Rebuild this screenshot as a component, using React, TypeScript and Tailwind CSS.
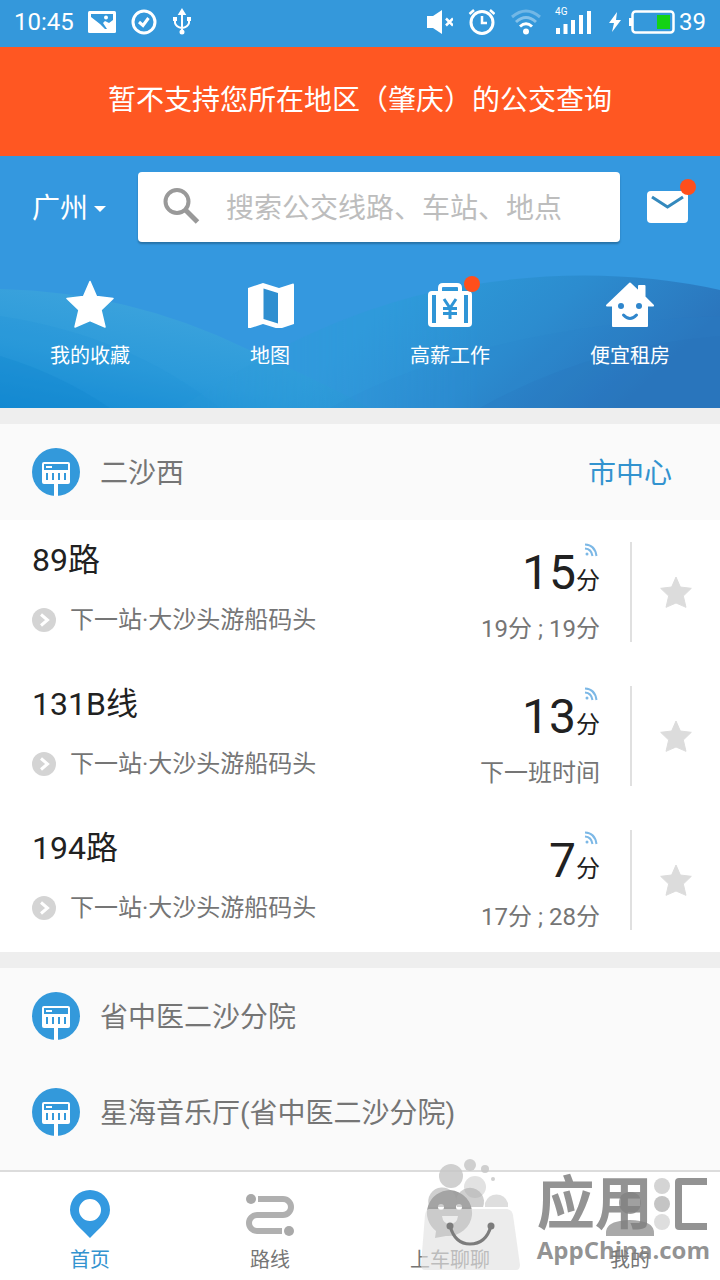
import type { ReactNode } from "react";

const SHORTCUTS = [
  { label: "我的收藏", icon: <StarIcon className="size-12" />, dot: false },
  { label: "地图", icon: <MapIcon />, dot: false },
  { label: "高薪工作", icon: <JobIcon />, dot: true },
  { label: "便宜租房", icon: <HouseIcon />, dot: false },
];

const LINES = [
  { name: "89路", next: "下一站·大沙头游船码头", minutes: 15, later: "19分 ; 19分" },
  { name: "131B线", next: "下一站·大沙头游船码头", minutes: 13, later: "下一班时间" },
  { name: "194路", next: "下一站·大沙头游船码头", minutes: 7, later: "17分 ; 28分" },
];

const STATIONS = ["省中医二沙分院", "星海音乐厅(省中医二沙分院)"];

const TABS = [
  { label: "首页", icon: <PinIcon />, active: true },
  { label: "路线", icon: <RouteIcon />, active: false },
  { label: "上车聊聊", icon: <ChatIcon />, active: false },
  { label: "我的", icon: <PersonIcon />, active: false },
];

function StarIcon({ className }: { className: string }) {
  return (
    <svg viewBox="0 0 48 48" className={className} fill="currentColor" aria-hidden="true">
      <path
        d="M24 1.500 L30.500 16.500 L47 18.500 L35 30 L39 47 L24 40.500 L9 47 L13 30 L1 18.500 L17.500 16.500 Z"
        stroke="currentColor"
        strokeWidth="1.500"
        strokeLinejoin="round"
      />
    </svg>
  );
}

function MapIcon() {
  return (
    <svg viewBox="0 0 48 48" className="size-12" aria-hidden="true">
      <path d="M2 8 L17 3 L33 8 L47 3.500 Q48 3 48 5 V44 L33 49 L17 44 L3 48.500 Q2 48.500 2 47 Z" fill="white" />
      <path d="M17.500 8.500 L32 13 V43.500 L17.500 39 Z" fill="#2f8fd0" />
    </svg>
  );
}

function JobIcon() {
  return (
    <svg viewBox="0 0 48 48" className="size-12" aria-hidden="true">
      <rect x="2" y="11" width="44" height="36" rx="4" fill="white" />
      <path d="M14 12 V8 Q14 5 17 5 H31 Q34 5 34 8 V12" fill="none" stroke="white" strokeWidth="4" />
      <path d="M8 15 V43 M40 15 V43" stroke="#2f95d6" strokeWidth="4" />
      <path d="M18 19 L24 28 L30 19 M24 28 V39 M17 28.500 H31 M17 33.500 H31" fill="none" stroke="#2f95d6" strokeWidth="3" />
    </svg>
  );
}

function HouseIcon() {
  return (
    <svg viewBox="0 0 48 48" className="size-12" aria-hidden="true">
      <path
        d="M24 3.500 L33 12 V6 H38.500 V17 L47 25.500 H41 V46 H7 V25.500 H1 Z"
        fill="white"
        stroke="white"
        strokeWidth="2"
        strokeLinejoin="round"
      />
      <circle cx="15" cy="26" r="3" fill="#2f86cc" />
      <circle cx="33" cy="26" r="3" fill="#2f86cc" />
      <path d="M17.500 35 Q24 42 30.500 35" fill="none" stroke="#2f86cc" strokeWidth="3" strokeLinecap="round" />
    </svg>
  );
}

function StationIcon() {
  return (
    <svg viewBox="0 0 48 48" className="size-12 shrink-0" aria-hidden="true">
      <circle cx="24" cy="24" r="24" fill="#3399db" />
      <path d="M22 34 H26 V48 H22 Z" fill="white" />
      <rect x="10" y="14" width="28" height="22" rx="2" fill="white" />
      <rect x="12" y="16" width="24" height="6" fill="#3399db" />
      <path d="M14 19 H20" stroke="white" strokeWidth="2" />
      <path d="M15 25 V32 M21 25 V32 M27 25 V32 M33 25 V32" stroke="#3399db" strokeWidth="2" />
    </svg>
  );
}

function PinIcon() {
  return (
    <svg viewBox="0 0 48 48" className="size-12" aria-hidden="true">
      <path
        fillRule="evenodd"
        fill="#3399e0"
        d="M24 0 A20 20 0 0 1 44 20 C44 31 33 38 24 48 C15 38 4 31 4 20 A20 20 0 0 1 24 0 Z M24 9 A11 11 0 1 0 24 31 A11 11 0 1 0 24 9 Z"
      />
    </svg>
  );
}

function RouteIcon() {
  return (
    <svg viewBox="0 0 48 48" className="size-12" aria-hidden="true">
      <circle cx="5" cy="9" r="5" fill="#a9a9a9" />
      <circle cx="43" cy="41" r="5" fill="#a9a9a9" />
      <path d="M12 9 H37 A8 8 0 0 1 37 25 H11 A8 8 0 0 0 11 41 H36" fill="none" stroke="#b0b0b0" strokeWidth="6" />
    </svg>
  );
}

function ChatIcon() {
  return (
    <svg viewBox="0 0 48 48" className="size-12" aria-hidden="true">
      <path d="M24 0 A24 23 0 1 1 20 46 L9 48 L10 41 A24 23 0 0 1 24 0 Z" fill="#a0a0a0" />
      <circle cx="15" cy="17" r="3" fill="white" />
      <circle cx="33" cy="17" r="3" fill="white" />
      <path d="M16 26 H32 Q31 34 24 34 Q17 34 16 26 Z" fill="white" />
    </svg>
  );
}

function PersonIcon() {
  return (
    <svg viewBox="0 0 48 48" className="size-12" aria-hidden="true">
      <path d="M24 2 C32 2 35 7 35 13 C35 19 30 24 24 24 C18 24 13 19 13 13 C13 7 16 2 24 2 Z" fill="#a0a0a0" />
      <path d="M0 46 V43 Q0 33 14 31 Q24 29 34 31 Q48 33 48 43 V46 Z" fill="#a9a9a9" />
    </svg>
  );
}

function Dot() {
  return <span className="absolute -top-1 -right-1.5 size-4 rounded-full bg-[#ff4f1c]" />;
}

function StatusBar() {
  return (
    <div className="flex h-[47px] items-center justify-between bg-[#3498db] px-3.5 pb-1 text-2xl text-white">
      <div className="flex items-center gap-3.5">
        <span>10:45</span>
        <svg viewBox="0 0 28 24" className="h-6 w-7" aria-hidden="true">
          <rect x="0" y="1" width="28" height="22" rx="1.500" fill="white" />
          <path d="M3 4 H25 V10 L21 13 L17 11 L15 13 L19 19 L17 19 L12 14 L3 7 Z" fill="#3498db" />
          <circle cx="18" cy="7.500" r="2" fill="white" />
        </svg>
        <svg viewBox="0 0 28 28" className="size-7" fill="none" stroke="white" strokeWidth="3" aria-hidden="true">
          <circle cx="14" cy="14" r="11" />
          <path d="M9 14 L13 17.500 L18.500 10" />
        </svg>
        <svg viewBox="0 0 20 28" className="h-7 w-5" fill="none" stroke="white" strokeWidth="2" aria-hidden="true">
          <path d="M10 4 V25 M3 11 V15 Q4 19 10 20 M17 11 V15 Q16 19 10 20" />
          <path d="M10 2 L12.500 6 H7.500 Z M2 10 H4 V12 H2 Z M16 10 H18 V12 H16 Z" fill="white" />
          <circle cx="10" cy="24" r="1.500" fill="white" />
        </svg>
      </div>
      <div className="flex items-center">
        <svg viewBox="0 0 28 24" className="mr-3.5 h-6 w-7" aria-hidden="true">
          <path d="M2 6 H8 L17 0 V24 L8 18 H2 Z" fill="white" />
          <path d="M21 8.500 L28 15.500 M28 8.500 L21 15.500" stroke="white" strokeWidth="2.500" />
        </svg>
        <svg viewBox="0 0 28 28" className="mr-4 size-7" fill="none" stroke="white" strokeWidth="3" aria-hidden="true">
          <circle cx="15" cy="14.500" r="11" />
          <path d="M15 8 V15 H20 M2.500 6 L7 2 M27.500 6 L23 2" strokeWidth="2.500" />
        </svg>
        <svg viewBox="0 0 30 26" className="mr-3.5 h-[26px] w-[30px]" fill="none" stroke="white" strokeWidth="3" aria-hidden="true">
          <path d="M1 8 Q15 -4 29 8" opacity="0.3" />
          <path d="M5 13 Q15 4 25 13" opacity="0.4" />
          <path d="M9 17.500 Q15 12 21 17.500" />
          <circle cx="15" cy="22.500" r="1.500" fill="white" />
        </svg>
        <span className="relative mr-4 h-6 w-[38px]">
          <span className="absolute -top-1 left-0 text-[10px] leading-3">4G</span>
          <svg viewBox="0 0 38 24" className="h-6 w-[38px]" stroke="white" strokeWidth="4" aria-hidden="true">
            <path d="M3 24 V18 M10.500 24 V14 M18 24 V10 M26 24 V5 M34 24 V1" />
          </svg>
        </span>
        <svg viewBox="0 0 12 20" className="mr-2 h-5 w-3" aria-hidden="true">
          <path d="M8 0 L0 11 H5 L3 20 L12 8 H7 Z" fill="white" />
        </svg>
        <svg viewBox="0 0 46 24" className="mr-1 h-6 w-[46px]" aria-hidden="true">
          <rect x="3.500" y="1.500" width="41" height="21" rx="3" fill="none" stroke="white" strokeWidth="2.500" />
          <rect x="0" y="8" width="3" height="8" fill="white" />
          <rect x="28" y="5" width="13" height="14" fill="#14d214" />
        </svg>
        <span>39</span>
      </div>
    </div>
  );
}

function HeaderWaves() {
  return (
    <svg viewBox="0 0 720 252" preserveAspectRatio="none" className="absolute inset-0 size-full" aria-hidden="true">
      <defs>
        <linearGradient id="left" x1="0.6" y1="0" x2="0" y2="1">
          <stop offset="0" stopColor="#42a6dd" />
          <stop offset="0.6" stopColor="#2b9ada" />
          <stop offset="1" stopColor="#128ad3" />
        </linearGradient>
        <linearGradient id="right" gradientUnits="userSpaceOnUse" x1="440" y1="100" x2="600" y2="270">
          <stop offset="0" stopColor="#2d9bd9" />
          <stop offset="0.5" stopColor="#2c8ccf" />
          <stop offset="1" stopColor="#2b76bd" />
        </linearGradient>
        <linearGradient id="crest" gradientUnits="userSpaceOnUse" x1="200" y1="0" x2="480" y2="0">
          <stop offset="0" stopColor="white" stopOpacity="0.2" />
          <stop offset="1" stopColor="white" stopOpacity="1" />
        </linearGradient>
        <mask id="fade">
          <rect width="720" height="252" fill="url(#crest)" />
        </mask>
      </defs>
      <path d="M0 133 Q130 136 245 192 Q330 230 370 252 H0 Z" fill="url(#left)" />
      <path d="M0 160 Q130 180 220 252 H0 Z" fill="#1c8fd8" opacity="0.2" />
      <path d="M0 200 Q60 218 110 252 H0 Z" fill="#0f85cd" opacity="0.3" />
      <g mask="url(#fade)">
        <path d="M180 252 Q330 150 470 129 Q600 108 720 134 V252 Z" fill="url(#right)" />
        <path d="M330 252 Q480 170 720 160 V252 Z" fill="#2a7fc6" opacity="0.15" />
        <path d="M480 252 Q590 190 720 180 V252 Z" fill="#2a6db5" opacity="0.15" />
      </g>
    </svg>
  );
}

function Header() {
  return (
    <header className="relative h-[252px] bg-[#3498df] text-white">
      <HeaderWaves />
      <div className="relative flex items-center pt-4 pr-8 pl-8">
        <button type="button" className="flex w-[106px] items-center gap-1.5 pt-1 text-[28px] leading-9">
          广州
          <svg viewBox="0 0 12 6" className="h-1.5 w-3" aria-hidden="true">
            <path d="M0 0 H12 L6 6 Z" fill="white" />
          </svg>
        </button>
        <label className="flex h-[70px] min-w-0 flex-1 items-center rounded bg-white pl-6 shadow-[0_2px_2px_rgba(0,0,0,0.25)]">
          <svg viewBox="0 0 40 40" className="size-10 shrink-0" fill="none" stroke="#999" aria-label="搜索">
            <circle cx="15" cy="14.500" r="11.500" strokeWidth="4" />
            <path d="M23 22.500 L35.500 35" strokeWidth="5" />
          </svg>
          <input
            type="text"
            placeholder="搜索公交线路、车站、地点"
            className="ml-6 min-w-0 flex-1 bg-transparent pt-1 text-[28px] leading-9 text-gray-800 outline-none placeholder:text-[#bdbdbd]"
          />
        </label>
        <button type="button" aria-label="消息" className="relative ml-[27px] h-8 w-[41px]">
          <svg viewBox="0 0 41 32" className="h-8 w-[41px]" aria-hidden="true">
            <rect width="41" height="32" rx="4" fill="white" />
            <path d="M5 6 L20.500 16 L36 6" fill="none" stroke="#3489bd" strokeWidth="3" />
          </svg>
          <span className="absolute -top-3 -right-2 size-4 rounded-full bg-[#ff4f1c]" />
        </button>
      </div>
      <div className="relative mt-[38px] grid grid-cols-4">
        {SHORTCUTS.map((item) => (
          <button key={item.label} type="button" className="flex flex-col items-center gap-3.5">
            <span className="relative">
              {item.icon}
              {item.dot && <Dot />}
            </span>
            <span className="text-xl leading-7">{item.label}</span>
          </button>
        ))}
      </div>
    </header>
  );
}

function StationHeader({ name, children }: { name: string; children?: ReactNode }) {
  return (
    <div className="flex h-24 items-center bg-[#fafafa] pr-12 pl-8 text-[28px] text-[#757575]">
      <StationIcon />
      <h2 className="ml-5 flex-1 pt-1">{name}</h2>
      {children}
    </div>
  );
}

function LineRow({ line }: { line: (typeof LINES)[number] }) {
  return (
    <li className="flex h-36 items-center bg-white pr-7 pl-8">
      <div className="flex-1 pb-2">
        <h3 className="text-[32px] leading-10 text-[#212121]">{line.name}</h3>
        <p className="mt-6 flex items-center gap-3.5 text-2xl text-[#757575]">
          <svg viewBox="0 0 24 24" className="size-6" aria-hidden="true">
            <circle cx="12" cy="12" r="12" fill="#d4d4d4" />
            <path d="M9 6.500 L15.500 12 L9 17.500" fill="none" stroke="white" strokeWidth="3" />
          </svg>
          {line.next}
        </p>
      </div>
      <div className="relative pt-1.5 text-right">
        <svg viewBox="0 0 14 14" className="absolute top-1 right-0.5 size-3.5" fill="none" stroke="#7cb8e6" strokeWidth="2" aria-hidden="true">
          <path d="M1 1.500 Q11 2 12.500 13 M1 5.500 Q7.500 6 8.500 13" />
          <circle cx="3" cy="11" r="1.500" fill="#7cb8e6" stroke="none" />
        </svg>
        <p className="text-2xl leading-[56px] text-[#212121]">
          <span className="text-5xl leading-[56px]">{line.minutes}</span>分
        </p>
        <p className="mt-1 text-2xl text-[#757575]">{line.later}</p>
      </div>
      <span className="ml-[30px] h-[100px] w-0.5 bg-[#e0e0e0]" />
      <button type="button" aria-label="收藏" className="ml-7 text-[#dcdcdc]">
        <StarIcon className="size-8" />
      </button>
    </li>
  );
}

function TabBar() {
  return (
    <nav className="grid h-[110px] grid-cols-4 border-t-2 border-[#dcdcdc] bg-white">
      {TABS.map((tab) => (
        <a
          key={tab.label}
          href="#"
          className={`flex flex-col items-center pt-[18px] text-xl ${
            tab.active ? "text-[#3393cf]" : "text-[#757575]"
          }`}
        >
          {tab.icon}
          <span className="mt-2 leading-7">{tab.label}</span>
        </a>
      ))}
    </nav>
  );
}

function StoreMark() {
  return (
    <div className="pointer-events-none absolute right-2.5 bottom-2 flex items-start gap-4">
      <svg viewBox="0 0 102 114" className="h-[114px] w-[102px]" aria-hidden="true">
        <g fill="#c8c8c8" opacity="0.85">
          <circle cx="32" cy="18" r="12" />
          <circle cx="51" cy="7" r="6" />
          <circle cx="66" cy="11" r="4" />
          <circle cx="74" cy="21" r="2" />
          <circle cx="56" cy="29" r="11" fill="#dedede" />
        </g>
        <g fill="#a8a8a8" opacity="0.55">
          <path d="M10 48 A14 14 0 1 1 37 46 L36 49 H10 Z" />
          <path d="M38 49 A14 14 0 1 1 64 49 Z" />
          <path d="M66 49 V45 A12 12 0 0 1 89 45 V49 Z" fill="#c4c4c4" />
        </g>
        <path d="M10 51 H88 Q93 52 94 57 L101 107 Q101 112 97 112 H6 Q2 112 2 107 L6 57 Q7 51 10 51 Z" fill="#e2e2e2" opacity="0.65" />
        <path d="M31 68 Q36 86 51 86 Q67 86 72 68" fill="none" stroke="#7c7c7c" strokeWidth="3" />
        <circle cx="31" cy="68" r="3.500" fill="#7c7c7c" />
        <circle cx="72" cy="68" r="3.500" fill="#7c7c7c" />
      </svg>
      <div className="flex flex-col pt-4 text-[#808080]/85">
        <div className="flex items-center">
          <span className="text-[58px] leading-[60px] font-bold">应用</span>
          <svg viewBox="0 0 18 54" className="h-[54px] w-[18px]" fill="#d4d4d4" aria-hidden="true">
            <circle cx="9" cy="9" r="8" />
            <circle cx="9" cy="27" r="8" fill="#c4c4c4" />
            <circle cx="9" cy="45" r="8" fill="#dedede" />
          </svg>
          <span className="ml-1 h-[52px] w-8 rounded-l border-y-[7px] border-l-[7px] border-[#808080]/85" />
        </div>
        <span className="font-['Open_Sans'] text-2xl leading-8 font-bold">AppChina.com</span>
      </div>
    </div>
  );
}

export default function App() {
  return (
    <div className="relative flex min-h-screen flex-col bg-[#fafafa] font-[Roboto,'Noto_Sans_CJK_SC',sans-serif]">
      <StatusBar />
      <div role="alert" className="flex h-[109px] items-center justify-center bg-[#ff5722] pb-0.5 text-[28px] text-white">
        暂不支持您所在地区（肇庆）的公交查询
      </div>
      <Header />
      <main className="flex-1">
        <section className="border-t-16 border-[#eeeeee]">
          <StationHeader name="二沙西">
            <a href="#" className="pt-1 text-[#3393cf]">
              市中心
            </a>
          </StationHeader>
          <ul>
            {LINES.map((line) => (
              <LineRow key={line.name} line={line} />
            ))}
          </ul>
        </section>
        <section className="border-t-16 border-[#eeeeee]">
          {STATIONS.map((name) => (
            <StationHeader key={name} name={name} />
          ))}
        </section>
      </main>
      <TabBar />
      <StoreMark />
    </div>
  );
}
